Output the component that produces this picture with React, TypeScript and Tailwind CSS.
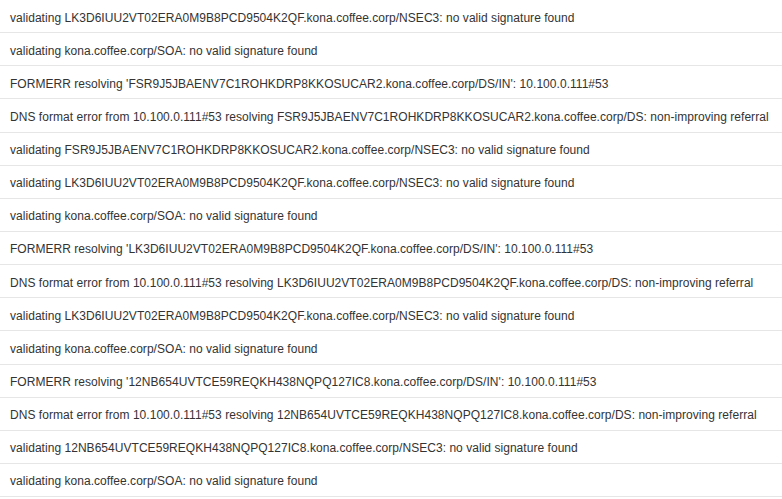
const lines = [
  "validating LK3D6IUU2VT02ERA0M9B8PCD9504K2QF.kona.coffee.corp/NSEC3: no valid signature found",
  "validating kona.coffee.corp/SOA: no valid signature found",
  "FORMERR resolving 'FSR9J5JBAENV7C1ROHKDRP8KKOSUCAR2.kona.coffee.corp/DS/IN': 10.100.0.111#53",
  "DNS format error from 10.100.0.111#53 resolving FSR9J5JBAENV7C1ROHKDRP8KKOSUCAR2.kona.coffee.corp/DS: non-improving referral",
  "validating FSR9J5JBAENV7C1ROHKDRP8KKOSUCAR2.kona.coffee.corp/NSEC3: no valid signature found",
  "validating LK3D6IUU2VT02ERA0M9B8PCD9504K2QF.kona.coffee.corp/NSEC3: no valid signature found",
  "validating kona.coffee.corp/SOA: no valid signature found",
  "FORMERR resolving 'LK3D6IUU2VT02ERA0M9B8PCD9504K2QF.kona.coffee.corp/DS/IN': 10.100.0.111#53",
  "DNS format error from 10.100.0.111#53 resolving LK3D6IUU2VT02ERA0M9B8PCD9504K2QF.kona.coffee.corp/DS: non-improving referral",
  "validating LK3D6IUU2VT02ERA0M9B8PCD9504K2QF.kona.coffee.corp/NSEC3: no valid signature found",
  "validating kona.coffee.corp/SOA: no valid signature found",
  "FORMERR resolving '12NB654UVTCE59REQKH438NQPQ127IC8.kona.coffee.corp/DS/IN': 10.100.0.111#53",
  "DNS format error from 10.100.0.111#53 resolving 12NB654UVTCE59REQKH438NQPQ127IC8.kona.coffee.corp/DS: non-improving referral",
  "validating 12NB654UVTCE59REQKH438NQPQ127IC8.kona.coffee.corp/NSEC3: no valid signature found",
  "validating kona.coffee.corp/SOA: no valid signature found",
];

export default function App() {
  return (
    <div className="bg-white w-[782px] h-[499px] overflow-hidden font-['Liberation_Sans',Arial,sans-serif] text-[#333] text-[12px] tracking-[0.04px]">
      <ul className="divide-y divide-[#e6e6e6] border-b border-[#e6e6e6]">
        {lines.map((line, i) => (
          <li key={i} className="px-[10px] pt-[9.5px] pb-[5.5px] leading-[17.14px] whitespace-nowrap">
            {line}
          </li>
        ))}
      </ul>
    </div>
  );
}
